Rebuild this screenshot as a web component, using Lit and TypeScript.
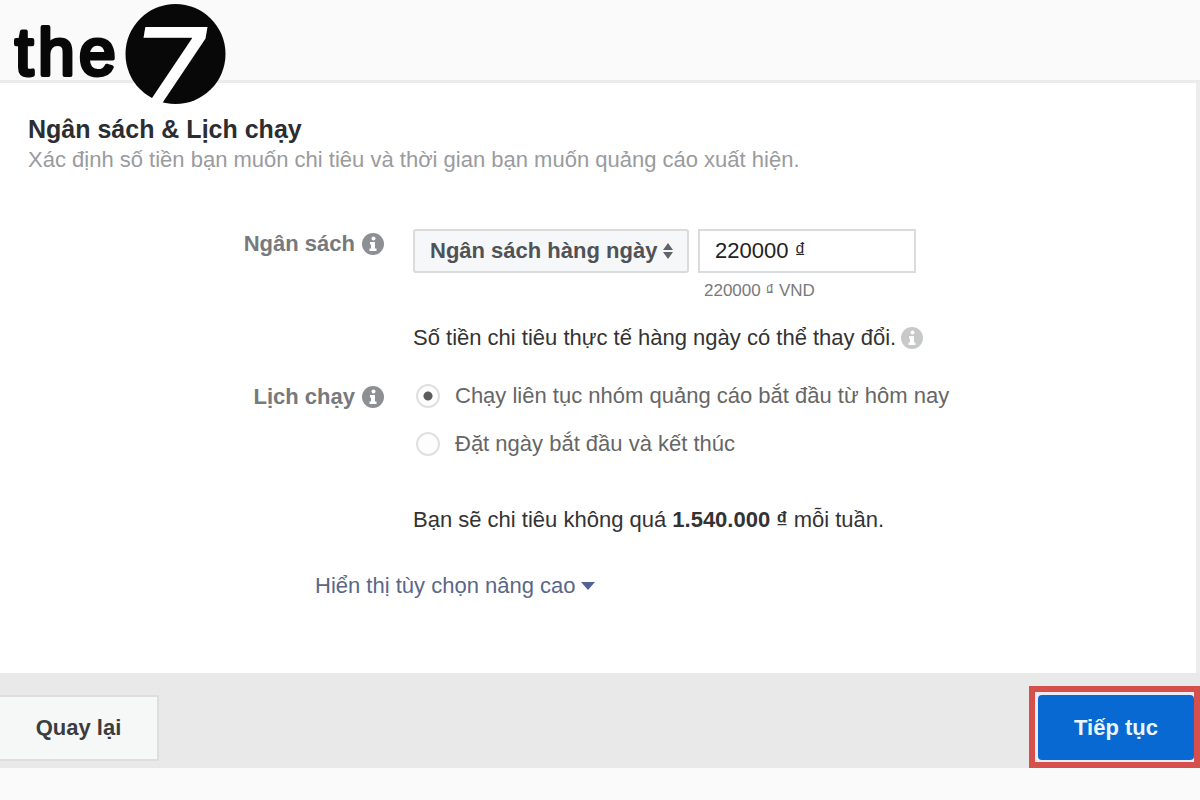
import { LitElement, html, css, svg } from "lit";
import { customElement, property, state } from "lit/decorators.js";

@customElement("info-icon")
class InfoIcon extends LitElement {
  static styles = css`
    :host { display: inline-flex; flex: none; color: #8d9093; }
    :host([light]) { color: #c6c8c9; }
    svg { display: block; width: 22px; height: 22px; }
  `;
  render() {
    return html`<svg viewBox="0 0 22 22" aria-hidden="true">
      <circle cx="11" cy="11" r="11" fill="currentColor" />
      <circle cx="11.5" cy="5.5" r="2" fill="#fff" />
      <path d="M8 9h5v6.5h1.5V18h-7v-2.5H9v-4H8z" fill="#fff" />
    </svg>`;
  }
}

@customElement("brand-logo")
class BrandLogo extends LitElement {
  static styles = css`
    :host { display: block; }
    svg { display: block; width: 220px; height: 104px; }
    .word {
      font: 66px "Liberation Sans", Arial, sans-serif;
      fill: #080808; stroke: #080808; stroke-width: 4px;
      stroke-linejoin: round; stroke-linecap: round;
    }
    .seven { font: italic 400 132px Inter, Roboto, sans-serif; fill: #fff; }
  `;
  render() {
    return html`<svg viewBox="10 0 220 104" role="img" aria-label="the7">
      ${svg`<defs><clipPath id="disc"><circle cx="175.5" cy="54" r="51" /></clipPath></defs>
      <text class="word" x="15 38 79" y="75">the</text>
      <circle cx="175.5" cy="54" r="50" fill="#080808" />
      <text class="seven" x="129" y="123" clip-path="url(#disc)">7</text>`}
    </svg>`;
  }
}

@customElement("app-root")
class AppRoot extends LitElement {
  @property() amount = "220000 ₫";
  @state() private schedule = "now";

  static styles = css`
    :host {
      display: block;
      min-height: 100vh;
      background: #fafafa;
      color: #333;
      font: 22px/28px "Liberation Sans", Arial, sans-serif;
    }
    * { box-sizing: border-box; }
    .top { height: 80px; padding: 0 10px; }
    .logo { position: relative; z-index: 1; }
    .panel {
      background: #fff;
      border-top: 3px solid #ebebeb;
      border-right: 4px solid #ececee;
      padding: 32px 24px 73px 0;
    }
    h1 { margin: 0; padding-left: 28px; font-size: 25px; line-height: 28px; color: #2b2d30; }
    .intro { margin: 0; padding-left: 28px; line-height: 34px; color: #999b9e; }
    .form {
      display: grid;
      grid-template-columns: 384px minmax(0, 1fr);
      column-gap: 29px;
      margin-top: 52px;
    }
    .label {
      display: flex;
      justify-content: flex-end;
      align-items: center;
      align-self: start;
      gap: 7px;
      height: 30px;
      font-weight: bold;
      color: #77797c;
    }
    .controls { display: flex; gap: 9px; }
    .picker { position: relative; width: 276px; }
    .picker svg { position: absolute; right: 16px; top: 14px; width: 10px; height: 16px; fill: #606367; pointer-events: none; }
    select, .amount {
      appearance: none;
      width: 100%;
      height: 44px;
      border: 2px solid #d9dbdc;
      border-radius: 3px;
      font: inherit;
      padding: 0 15px;
      outline: none;
    }
    select { background: #f6f7f9; color: #4f5256; font-weight: bold; text-overflow: clip; }
    .amount { background: #fff; color: #222; border-radius: 0; }
    .entry { width: 218px; }
    .hint { margin: 0; padding: 6px 0 0 6px; font-size: 17px; line-height: 24px; color: #77797c; }
    .note { display: flex; align-items: center; gap: 5px; margin: 21px 0 0; }
    .schedule { margin-top: 30px; }
    .choice { display: flex; align-items: center; gap: 15px; height: 28px; color: #666; }
    .choice + .choice { margin-top: 20px; }
    input[type="radio"] {
      appearance: none;
      width: 24px;
      height: 24px;
      margin: 0 0 0 3px;
      border: 2px solid #e0e0e0;
      border-radius: 50%;
      background: #fdfdfd;
    }
    input[type="radio"]:checked { background: radial-gradient(circle, #5c5c5c 4px, #fdfdfd 5px); }
    .total { margin: 48px 0 0; color: #333; }
    .advanced {
      display: inline-flex;
      align-items: center;
      gap: 5px;
      margin: 38px 0 0 315px;
      color: #5a6788;
      text-decoration: none;
    }
    .advanced svg { width: 14px; height: 8px; fill: #536394; }
    .footer {
      display: flex;
      justify-content: space-between;
      align-items: flex-end;
      background: #e9e9ea;
      padding-top: 13px;
    }
    button { font: bold 22px/28px "Liberation Sans", Arial, sans-serif; height: 66px; }
    .back {
      width: 159px;
      margin-bottom: 7px;
      background: #f6f8f8;
      border: 2px solid #dcdedf;
      border-left: 0;
      color: #3b3d40;
    }
    .mark { border: 6px solid #d5504c; background: #eceaf2; padding: 3px 0 2px 3px; }
    .next { display: block; width: 156px; height: 65px; border: 0; border-radius: 4px; background: #0869d2; color: #e9f6ff; }
  `;

  private choose(e: Event) {
    this.schedule = (e.target as HTMLInputElement).value;
  }

  render() {
    return html`
      <header class="top"><brand-logo class="logo"></brand-logo></header>
      <main class="panel">
        <h1>Ngân sách &amp; Lịch chạy</h1>
        <p class="intro">Xác định số tiền bạn muốn chi tiêu và thời gian bạn muốn quảng cáo xuất hiện.</p>
        <div class="form">
          <label class="label" for="budget">Ngân sách <info-icon></info-icon></label>
          <div>
            <div class="controls">
              <div class="picker">
                <select id="budget"><option>Ngân sách hàng ngày</option></select>
                <svg viewBox="0 0 10 16" aria-hidden="true"><path d="M5 0l5 7H0zM5 16L0 9h10z" /></svg>
              </div>
              <div class="entry">
                <input class="amount" type="text" aria-label="Ngân sách" .value=${this.amount} />
                <p class="hint">${this.amount} VND</p>
              </div>
            </div>
            <p class="note">Số tiền chi tiêu thực tế hàng ngày có thể thay đổi. <info-icon light></info-icon></p>
          </div>
          <div class="label schedule" id="schedule">Lịch chạy <info-icon></info-icon></div>
          <div class="schedule">
            <div role="radiogroup" aria-labelledby="schedule">
              <label class="choice">
                <input type="radio" name="schedule" value="now" .checked=${this.schedule === "now"} @change=${this.choose} />
                Chạy liên tục nhóm quảng cáo bắt đầu từ hôm nay
              </label>
              <label class="choice">
                <input type="radio" name="schedule" value="dates" .checked=${this.schedule === "dates"} @change=${this.choose} />
                Đặt ngày bắt đầu và kết thúc
              </label>
            </div>
            <p class="total">Bạn sẽ chi tiêu không quá <b>1.540.000 ₫</b> mỗi tuần.</p>
          </div>
        </div>
        <a class="advanced" href="#advanced">Hiển thị tùy chọn nâng cao
          <svg viewBox="0 0 14 8" aria-hidden="true"><path d="M0 0h14L7 8z" /></svg>
        </a>
      </main>
      <footer class="footer">
        <button class="back" type="button">Quay lại</button>
        <div class="mark"><button class="next" type="button">Tiếp tục</button></div>
      </footer>
    `;
  }
}
